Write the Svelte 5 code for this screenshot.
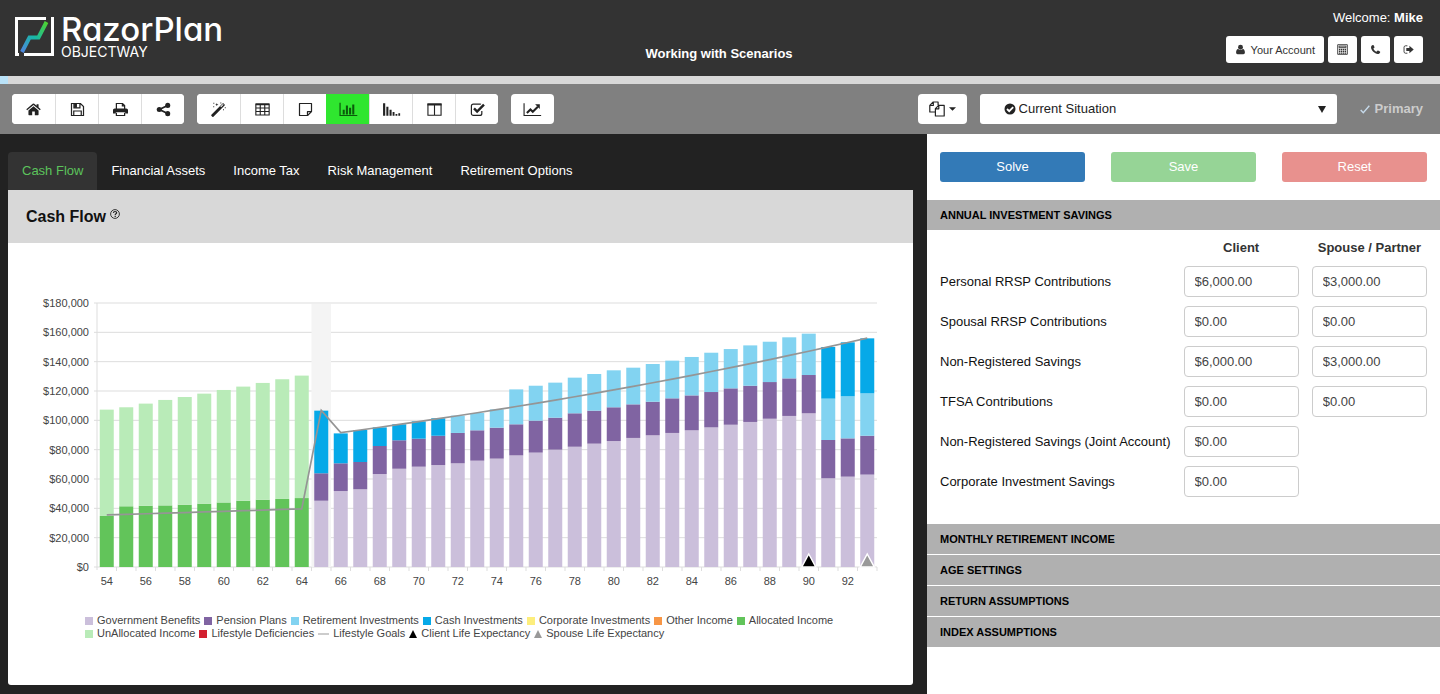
<script lang="ts">
  // icons drawn on a 16 x 16 grid
  const icons: Record<string, string> = {
    home: '<path fill="currentColor" d="M8 4.6 2.6 9.1V13.4c0 .4.2.6.6.6h3.4v-3.8h2.8V14h3.4c.4 0 .6-.2.6-.6V9.1z"/><path fill="currentColor" d="M8.8 1.9a1.2 1.2 0 0 0-1.6 0L.3 7.7l.9 1.1L8 3.2l6.8 5.6.9-1.1-2.3-2V2.3h-2.1v1.6z"/>',
    save: '<path fill="none" stroke="currentColor" stroke-width="1.3" d="M1.6 1.6h9.6l3.2 3.2v9.6H1.6zM4 14.2V9.6h8v4.6M4.2 1.8v4.4h6.4V1.8"/><path fill="currentColor" d="M4.4 2h3v4h-3z"/>',
    print: '<path fill="none" stroke="currentColor" stroke-width="1.3" d="M3.6 7.6V1.6h6.6l2.2 2.2v3.8M10 1.8v2.4h2.4"/><path fill="currentColor" d="M1.8 7h12.4c1 0 1.8.8 1.8 1.8v3.4h-3v-1.4H3v1.4H0V8.8C0 7.8.8 7 1.8 7z"/><path fill="none" stroke="currentColor" stroke-width="1.3" d="M3.6 11.4v3h8.8v-3"/>',
    share: '<path fill="none" stroke="currentColor" stroke-width="1.9" d="M12.4 3.7 3.6 8l8.8 4.3"/><circle cx="12.5" cy="3.6" r="2.7" fill="currentColor"/><circle cx="3.5" cy="8" r="2.7" fill="currentColor"/><circle cx="12.5" cy="12.4" r="2.7" fill="currentColor"/>',
    wand: '<path fill="currentColor" d="m.4 13.5 11.9-11.9c.4-.4.8-.4 1.200 0l1 1c.4.4.4.8 0 1.200L2.600 15.700c-.4.4-.8.4-1.200 0l-1-1c-.4-.4-.4-.8 0-1.200z"/><path stroke="#fff" stroke-width="1.100" d="m10.400 5.100 2.700-2.700"/><path fill="currentColor" d="m6.200 1 .5 1.300 1.300.5-1.300.5-.5 1.300-.5-1.300-1.300-.5 1.300-.5zM2.500.8h1v1h-1zM10 .6h1v1h-1zM2.400 4.600h1v1h-1zM14.700 5.600h1v1h-1zM12.800 7.800h1v1h-1z"/>',
    table: '<path fill="none" stroke="currentColor" stroke-width="1.2" d="M.9 2.200h14.200v11.600H.9zM.9 6.400h14.200M.9 10.100h14.200M5.600 3v10.800M10.400 3v10.800"/><path fill="currentColor" d="M.9 1.700h14.200v1.800H.9z"/>',
    note: '<path fill="none" stroke="currentColor" stroke-width="1.3" stroke-linejoin="round" d="M1.600 1.600h12.800v8.600l-4.200 4.200H1.600zM14.200 10.300h-4.100v4"/>',
    bars: '<path fill="none" stroke="currentColor" stroke-width="1.3" d="M-1 .8v13.600h18.400"/><path fill="currentColor" d="M1.800 8.200h2.200v5H1.800zM5.200 3.800h2.200v9.400H5.200zM8.600 6h2.200v7.200H8.600zM12 2.600h2.200v10.600H12z"/>',
    decline: '<path fill="currentColor" d="M-1 1.200h2.300v13.400H-1zM2.500 5h2.200v9.600H2.500zM5.900 8.200h2.200v6.400H5.900zM9.200 10.700h2v3.900h-2zM12.300 12.900h1.900v1.700h-1.900zM15.300 12h1.900v2.600h-1.900z"/>',
    columns: '<path fill="none" stroke="currentColor" stroke-width="1.2" d="M1 2.200h14v11.900H1zM8 3v11"/><path fill="currentColor" d="M.5 1.600h15v2.100H.5z"/>',
    check: '<path fill="none" stroke="currentColor" stroke-width="1.3" d="M12.600 9.500v2.700c0 1.200-.9 2.100-2.100 2.100H3.600c-1.200 0-2.100-.9-2.100-2.100V4.300c0-1.200.9-2.100 2.100-2.100h6.900c.5 0 .9.100 1.200.3"/><path fill="none" stroke="currentColor" stroke-width="2.600" d="m4.300 6.900 3.300 3.300 7.300-7.300"/>',
    line: '<path fill="none" stroke="currentColor" stroke-width="1.2" d="M-1 1.200v13.200h18.200"/><path fill="none" stroke="currentColor" stroke-width="2.200" d="m2 11.700 3.800-3.800 2.500 2.500 5.400-5.400"/><path fill="currentColor" d="M10.800 2.400h5v5z"/>',
    user: '<circle cx="8" cy="4.6" r="3.6" fill="currentColor"/><path fill="currentColor" d="M4.600 7.400c.9.900 2 1.500 3.400 1.500s2.500-.6 3.400-1.500c2.200.3 3 2.400 3 5.100 0 1.500-.9 2.500-2.200 2.500H3.800c-1.300 0-2.200-1-2.200-2.500 0-2.700.8-4.800 3-5.100z"/>',
    calc: '<path fill="none" stroke="currentColor" stroke-width="1.3" d="M1 1h14v14H1zM3 3.100h10v2.200H3z"/><path fill="none" stroke="currentColor" stroke-width="2" stroke-dasharray="2 .8" d="M2.800 8h10.800M2.800 10.700h10.800M2.800 13.300h10.800"/>',
    phone: '<path fill="currentColor" d="M4.300 1.400c.5-.2.700 0 .9.400l1.300 2.500c.2.400.1.700-.2 1-.6.600-1.400 1-1.300 1.600.3 1.300 2.800 3.800 4.200 4.200.600.100 1-.7 1.600-1.300.3-.3.600-.4 1-.2l2.600 1.400c.4.200.5.500.4.900-.3 1.600-1.900 2.600-3.500 2.600C6.900 14.500 1.500 9.100 1.500 4.800c0-1.700 1.200-3 2.800-3.400z"/>',
    exit: '<path fill="none" stroke="currentColor" stroke-width="1.3" d="M6.400 2.600H3.600c-1.200 0-2.100.9-2.100 2.100v6.600c0 1.200.9 2.100 2.100 2.100h2.800"/><path fill="currentColor" d="M9.300 2.700 15.600 8l-6.300 5.300v-3.100H4.800V5.800h4.500z"/>',
    copies: '<path fill="none" stroke="currentColor" stroke-width="1.2" stroke-linejoin="round" d="M6 11H.8V4.400L4.200 1h4.900v3.200M4.300 1v3.500H.8M6.400 7.600l3.300-3.200h5.500V15H6.400zM9.800 4.400v3.400H6.400"/>',
  };

  const header = ['calc', 'phone', 'exit'];
  const labels: Record<string, string> = {
    home: 'Home', save: 'Save plan', print: 'Print', share: 'Share', wand: 'Wizard', table: 'Table',
    note: 'Notes', bars: 'Bar chart', decline: 'Declining chart', columns: 'Columns', check: 'Checklist',
    line: 'Line chart', calc: 'Calculator', phone: 'Phone', exit: 'Log out',
  };
  const groups = [
    ['home', 'save', 'print', 'share'],
    ['wand', 'table', 'note', 'bars', 'decline', 'columns', 'check'],
    ['line'],
  ];
  let activeTool = $state('bars');

  const tabs = ['Cash Flow', 'Financial Assets', 'Income Tax', 'Risk Management', 'Retirement Options'];
  let activeTab = $state('Cash Flow');

  // running totals in thousands of dollars, bottom segment first
  const working = [
    [34.8, 107.3], [41.4, 108.9], [41.8, 111.4], [42, 113.9], [42.5, 115.9], [43.2, 118.2],
    [44, 120.7], [45.2, 123], [45.9, 125.5], [46.4, 128], [47, 130.5],
  ];
  // government, pension, retirement investments, cash
  const retired = [
    [45.2, 63.9, 63.9, 106.6], [51.8, 70.7, 70.7, 91.1], [53, 71.6, 71.6, 93.4], [63.4, 82.5, 82.5, 95.2],
    [67, 86.4, 86.4, 97.3], [68.4, 87.5, 87.5, 99.3], [69.5, 89.5, 89.5, 101.4], [70.7, 91.4, 103.2],
    [72.5, 93.2, 105], [73.9, 95, 107.5], [76.1, 97.3, 121.1], [78, 99.8, 123.6], [80, 101.8, 125.7],
    [82, 104.8, 129.1], [84.1, 106.6, 131.6], [85.9, 108.9, 134.1], [88, 110.9, 135.9], [89.8, 112.7, 138.4],
    [91.4, 115, 140.7], [93.2, 117, 143.2], [95.2, 119.3, 146.1], [97, 121.8, 148.6], [98.9, 123.6, 151.1],
    [101.1, 126.1, 153.6], [103, 128.6, 156.6], [104.8, 130.9, 159.1], [60.5, 86.6, 114.8, 150],
    [61.6, 87.7, 116.4, 153.2], [63, 89.5, 118.4, 155.9],
  ];
  const workColors = ['#62c45a', '#b9ebb8'];
  const retiredColors = ['#cbbfdb', '#8064a2', '#82d3f1', '#06a9e8'];

  const left = 89;
  const base = 324;
  const step = 19.5;
  const y = (v: number) => base - (v * 264) / 180;
  const mid = (age: number) => left + (age - 54) * step + step / 2;

  function segments(totals: number[], colors: string[], age: number) {
    return totals.map((t, i) => ({
      x: mid(age) - 7,
      y: y(t),
      height: ((t - (totals[i - 1] ?? 0)) * 264) / 180,
      fill: colors[i],
    })).filter((s) => s.height > 0);
  }

  const bars = [
    ...working.flatMap((t, i) => segments(t, workColors, 54 + i)),
    ...retired.flatMap((t, i) => segments(t, retiredColors, 65 + i)),
  ];

  // goals grow with inflation before and after the retirement year
  function goal(age: number) {
    if (age < 65) return 35.5 * 1.0112 ** (age - 54);
    if (age === 65) return 106.8;
    return 91.6 * 1.01994 ** (age - 66);
  }

  const ages = Array.from({ length: 40 }, (_, i) => 54 + i);
  const goals = ages.map((age) => `${mid(age)},${y(goal(age))}`).join(' ');
  const ticks = [0, 20, 40, 60, 80, 100, 120, 140, 160, 180];

  const legend = [
    { name: 'Government Benefits', color: '#cbbfdb' },
    { name: 'Pension Plans', color: '#8064a2' },
    { name: 'Retirement Investments', color: '#82d3f1' },
    { name: 'Cash Investments', color: '#06a9e8' },
    { name: 'Corporate Investments', color: '#fdee7d' },
    { name: 'Other Income', color: '#f79646' },
    { name: 'Allocated Income', color: '#62c45a' },
    { name: 'UnAllocated Income', color: '#b9ebb8' },
    { name: 'Lifestyle Deficiencies', color: '#d2202f' },
    { name: 'Lifestyle Goals', color: '#999', shape: 'line' },
    { name: 'Client Life Expectancy', color: '#000', shape: 'triangle' },
    { name: 'Spouse Life Expectancy', color: '#999', shape: 'triangle' },
  ];

  let savings = $state([
    { id: 'personal', label: 'Personal RRSP Contributions', client: '$6,000.00', spouse: '$3,000.00' },
    { id: 'spousal', label: 'Spousal RRSP Contributions', client: '$0.00', spouse: '$0.00' },
    { id: 'nonreg', label: 'Non-Registered Savings', client: '$6,000.00', spouse: '$3,000.00' },
    { id: 'tfsa', label: 'TFSA Contributions', client: '$0.00', spouse: '$0.00' },
    { id: 'joint', label: 'Non-Registered Savings (Joint Account)', client: '$0.00', spouse: null },
    { id: 'corporate', label: 'Corporate Investment Savings', client: '$0.00', spouse: null },
  ]);
  const sections = ['Monthly Retirement Income', 'Age Settings', 'Return Assumptions', 'Index Assumptions'];
</script>

{#snippet icon(name: string)}
  <svg class="icon" viewBox="0 0 16 16" aria-hidden="true">{@html icons[name]}</svg>
{/snippet}

<div class="page">
  <header class="top">
    <a class="logo" href="#home">
      <svg class="mark" viewBox="0 0 39 39" aria-hidden="true">
        <defs>
          <linearGradient id="bolt" x1="0" y1="1" x2="1" y2="0">
            <stop offset="0" stop-color="#4f86e0" />
            <stop offset="0.5" stop-color="#17b8a6" />
            <stop offset="1" stop-color="#4fd32f" />
          </linearGradient>
        </defs>
        <path d="M31 1.500H1.500V37.500H4M9 37.500H37.500V1.500H36" fill="none" stroke="#fff" stroke-width="3" />
        <path d="M7 35 14.500 20.500H23.500L31.500 5" fill="none" stroke="url(#bolt)" stroke-width="4" />
      </svg>
      <span class="brand">
        <span class="name">RazorPlan</span>
        <span class="owner">OBJECTWAY</span>
      </span>
    </a>
    <h1 class="title">Working with Scenarios</h1>
    <div class="account">
      <div class="welcome">Welcome: <b>Mike</b></div>
      <div class="account-buttons">
        <button class="small">{@render icon('user')}Your Account</button>
        {#each header as name}
          <button class="small" aria-label={labels[name]}>{@render icon(name)}</button>
        {/each}
      </div>
    </div>
  </header>
  <div class="strip"><div class="progress"></div></div>

  <div class="toolbar">
    {#each groups as group}
      <div class="group">
        {#each group as name}
          <button class="tool" class:active={activeTool === name} aria-label={labels[name]} onclick={() => (activeTool = name)}>
            {@render icon(name)}
          </button>
        {/each}
      </div>
    {/each}
    <button class="copies" aria-label="Copy scenario">
      {@render icon('copies')}
      <svg class="caret" viewBox="0 0 8 4" aria-hidden="true"><path d="M0 0h8L4 4z" fill="currentColor" /></svg>
    </button>
    <div class="scenario">
      <svg class="badge" viewBox="0 0 12 12" aria-hidden="true">
        <circle cx="6" cy="6" r="5.500" fill="#222" />
        <path d="m3 6 2.200 2.200L9.200 4.200" fill="none" stroke="#fff" stroke-width="1.800" />
      </svg>
      <select aria-label="Scenario">
        <option>Current Situation</option>
      </select>
      <svg class="arrow" viewBox="0 0 8 7" aria-hidden="true"><path d="M0 0h8L4 7z" fill="#222" /></svg>
    </div>
    <div class="primary">
      <svg viewBox="0 0 10 9" aria-hidden="true"><path d="m.7 5 2.600 2.800L9.300.8" fill="none" stroke="#c5d9ea" stroke-width="1.400" /></svg>
      Primary
    </div>
  </div>

  <main class="main">
    <section class="report">
      <nav class="tabs">
        {#each tabs as tab}
          <a href="#{tab}" class="tab" class:active={activeTab === tab} onclick={() => (activeTab = tab)}>{tab}</a>
        {/each}
      </nav>
      <div class="card">
        <div class="card-header">
          <h2>Cash Flow</h2>
          <svg class="help" viewBox="0 0 10 10" aria-hidden="true">
            <circle cx="5" cy="5" r="4.400" fill="none" stroke="#222" stroke-width="0.900" />
            <path d="M3.400 3.900c.1-1 .8-1.400 1.600-1.400 1 0 1.700.5 1.700 1.300 0 1-1.500 1-1.500 2.100" fill="none" stroke="#222" stroke-width="1.200" />
            <path d="M4.600 6.700h1.200v1.200H4.600z" fill="#222" />
          </svg>
        </div>
        <svg class="chart" viewBox="0 0 905 357" role="img" aria-label="Cash flow by age">
          {#each ticks as t}
            <line x1="86" x2="869" y1={y(t)} y2={y(t)} class="grid" />
            <text x="81" y={y(t) + 4} text-anchor="end">{t ? `$${t},000` : '$0'}</text>
          {/each}
          <line x1={left} x2={left} y1="60" y2="327" class="grid" />
          {#each ages as age}
            <line x1={mid(age) + step / 2} x2={mid(age) + step / 2} y1={base} y2="328" class="grid" />
            {#if age % 2 === 0}
              <text x={mid(age)} y="342" text-anchor="middle">{age}</text>
            {/if}
          {/each}
          <rect x={mid(65) - step / 2} y="61" width={step} height="263" fill="#f4f4f4" />
          {#each bars as bar}
            <rect x={bar.x} y={bar.y} width="14" height={bar.height} fill={bar.fill} />
          {/each}
          <polyline points={goals} fill="none" stroke="#959595" stroke-width="1.700" />
          {#each [{ age: 90, fill: '#000' }, { age: 93, fill: '#999' }] as m}
            <path d="M{mid(m.age)} {base - 13}l7 13h-14z" fill={m.fill} stroke="#fff" stroke-width="1.500" />
          {/each}
        </svg>
        <ul class="legend">
          {#each legend as item}
            <li>
              <svg class:wide={item.shape === 'line'} viewBox="0 0 8 8" preserveAspectRatio="none" aria-hidden="true">
                {#if item.shape === 'line'}
                  <path d="M0 4h8" stroke={item.color} />
                {:else if item.shape === 'triangle'}
                  <path d="M4 0l4 8H0z" fill={item.color} />
                {:else}
                  <rect width="8" height="8" fill={item.color} />
                {/if}
              </svg>
              {item.name}
            </li>
          {/each}
        </ul>
      </div>
    </section>

    <aside class="panel">
      <div class="actions">
        <button class="solve">Solve</button>
        <button class="save">Save</button>
        <button class="reset">Reset</button>
      </div>
      <h3><button class="section">Annual Investment Savings</button></h3>
      <div class="fields">
        <span></span>
        <span class="column">Client</span>
        <span class="column">Spouse / Partner</span>
        {#each savings as row}
          <label for={row.id}>{row.label}</label>
          <input id={row.id} type="text" bind:value={row.client} />
          {#if row.spouse !== null}
            <input type="text" aria-label="{row.label}, spouse" bind:value={row.spouse} />
          {:else}
            <span></span>
          {/if}
        {/each}
      </div>
      {#each sections as name}
        <h3><button class="section">{name}</button></h3>
      {/each}
    </aside>
  </main>
</div>

<style>
  :global(body) {
    background: #222;
  }

  .page {
    min-height: 100vh;
    display: flex;
    flex-direction: column;
    font-family: "Liberation Sans", Arial, sans-serif;
    font-size: 13px;
    line-height: 18px;
    color: #111;
  }

  button,
  input,
  select {
    font: inherit;
    color: inherit;
    box-sizing: border-box;
  }

  button {
    border: 0;
    padding: 0;
    cursor: pointer;
  }

  h1,
  h2,
  h3 {
    margin: 0;
    font-size: inherit;
  }

  .icon {
    width: 15px;
    height: 15px;
    overflow: visible;
    flex: none;
  }

  .top {
    display: grid;
    grid-template-columns: 1fr auto 1fr;
    height: 76px;
    padding: 0 17px 0 15px;
    background: #333;
    color: #fff;
  }

  .logo {
    display: flex;
    align-items: center;
    gap: 7px;
    padding-bottom: 3px;
    color: #fff;
    text-decoration: none;
  }

  .mark {
    width: 39px;
    height: 39px;
  }

  .brand {
    display: flex;
    flex-direction: column;
    font-family: "Inter", sans-serif;
    font-feature-settings: "cv11";
  }

  .name {
    font-size: 33px;
    line-height: 30px;
    font-weight: 500;
  }

  .owner {
    font-size: 14px;
    line-height: 16px;
  }

  .title {
    align-self: end;
    padding-bottom: 13px;
  }

  .account {
    display: flex;
    flex-direction: column;
    align-items: flex-end;
    gap: 9px;
    padding-top: 9px;
  }

  .account-buttons {
    display: flex;
    gap: 4px;
  }

  .small {
    display: flex;
    align-items: center;
    gap: 5px;
    height: 27px;
    padding: 0 9px;
    border-radius: 3px;
    background: #fff;
    color: #333;
    font-size: 11px;
  }

  .small .icon {
    width: 11px;
    height: 11px;
  }

  .strip {
    height: 8px;
    background: #d8d8d8;
  }

  .progress {
    width: 8px;
    height: 8px;
    background: #b9e2f8;
  }

  .toolbar {
    display: flex;
    align-items: center;
    gap: 13px;
    height: 50px;
    padding: 0 17px 0 12px;
    background: #808080;
    color: #222;
  }

  .group {
    display: flex;
    border-radius: 4px;
    background: #fff;
    overflow: hidden;
  }

  .tool {
    display: flex;
    align-items: center;
    justify-content: center;
    width: 43px;
    height: 30px;
    background: #fff;
  }

  .tool + .tool {
    border-left: 1px solid #ddd;
  }

  .tool.active {
    background: #2fe62f;
    border-color: #2fe62f;
    color: #0b5a0b;
  }

  .copies {
    display: flex;
    align-items: center;
    justify-content: center;
    gap: 4px;
    width: 49px;
    height: 30px;
    margin-left: auto;
    border-radius: 4px;
    background: #fff;
  }

  .copies .icon {
    width: 16px;
    height: 16px;
  }

  .caret {
    width: 7px;
    height: 4px;
  }

  .scenario {
    position: relative;
    width: 357px;
  }

  .scenario select {
    display: block;
    width: 100%;
    height: 30px;
    padding: 0 24px 0 39px;
    appearance: none;
    border: 0;
    border-radius: 3px;
    background: #fff;
  }

  .badge {
    position: absolute;
    left: 24px;
    top: 9px;
    width: 12px;
    height: 12px;
  }

  .arrow {
    position: absolute;
    right: 11px;
    top: 12px;
    width: 8px;
    height: 7px;
  }

  .primary {
    display: flex;
    align-items: center;
    gap: 5px;
    padding-left: 10px;
    color: #ccc;
    font-weight: bold;
  }

  .primary svg {
    width: 10px;
    height: 9px;
  }

  .main {
    flex: 1;
    display: grid;
    grid-template-columns: minmax(0, 103fr) minmax(0, 57fr);
    background: #222;
  }

  .report {
    padding: 18px 14px 9px 8px;
  }

  .tabs {
    display: flex;
  }

  .tab {
    padding: 10px 14px;
    border-radius: 4px 4px 0 0;
    color: #fff;
    line-height: 18px;
    text-decoration: none;
  }

  .tab.active {
    background: #333;
    color: #5cc45c;
  }

  .card {
    padding-bottom: 45px;
    border-radius: 0 0 3px 3px;
    background: #fff;
  }

  .card-header {
    display: flex;
    gap: 4px;
    padding: 17px 18px 16px;
    background: #d8d8d8;
    line-height: 20px;
  }

  .card-header h2 {
    font-size: 16px;
  }

  .help {
    width: 10px;
    height: 10px;
    margin-top: 2px;
  }

  .chart {
    display: block;
    width: 100%;
    height: auto;
    font-size: 11px;
    fill: #444;
  }

  .grid {
    stroke: #ddd;
  }

  .legend {
    display: flex;
    flex-wrap: wrap;
    column-gap: 4px;
    margin: 0;
    padding: 14px 50px 0 77px;
    list-style: none;
    font-size: 11px;
    line-height: 13px;
    color: #444;
  }

  .legend li {
    display: flex;
    align-items: center;
    gap: 4px;
  }

  .legend svg {
    width: 8px;
    height: 8px;
  }

  .legend .wide {
    width: 11px;
  }

  .panel {
    background: #fff;
  }

  .actions {
    display: grid;
    grid-template-columns: repeat(3, 1fr);
    gap: 26px;
    padding: 18px 13px;
  }

  .actions button {
    height: 30px;
    border-radius: 3px;
    color: #fff;
  }

  .solve {
    background: #337ab7;
  }

  .save {
    background: #96d496;
  }

  .reset {
    background: #e8918e;
  }

  .section {
    display: block;
    width: 100%;
    height: 30px;
    margin-bottom: 1px;
    padding: 0 13px;
    background: #b0b0b0;
    color: #000;
    font-size: 11px;
    font-weight: bold;
    text-align: left;
    text-transform: uppercase;
  }

  .fields {
    display: grid;
    grid-template-columns: minmax(0, 2fr) minmax(0, 1fr) minmax(0, 1fr);
    align-items: center;
    gap: 9px 13px;
    padding: 8px 13px 27px;
  }

  .column {
    color: #333;
    font-weight: bold;
    text-align: center;
    white-space: nowrap;
  }

  .fields input {
    width: 100%;
    height: 31px;
    padding: 0 10px;
    border: 1px solid #ccc;
    border-radius: 4px;
    background: #fff;
    color: #444;
  }
</style>
